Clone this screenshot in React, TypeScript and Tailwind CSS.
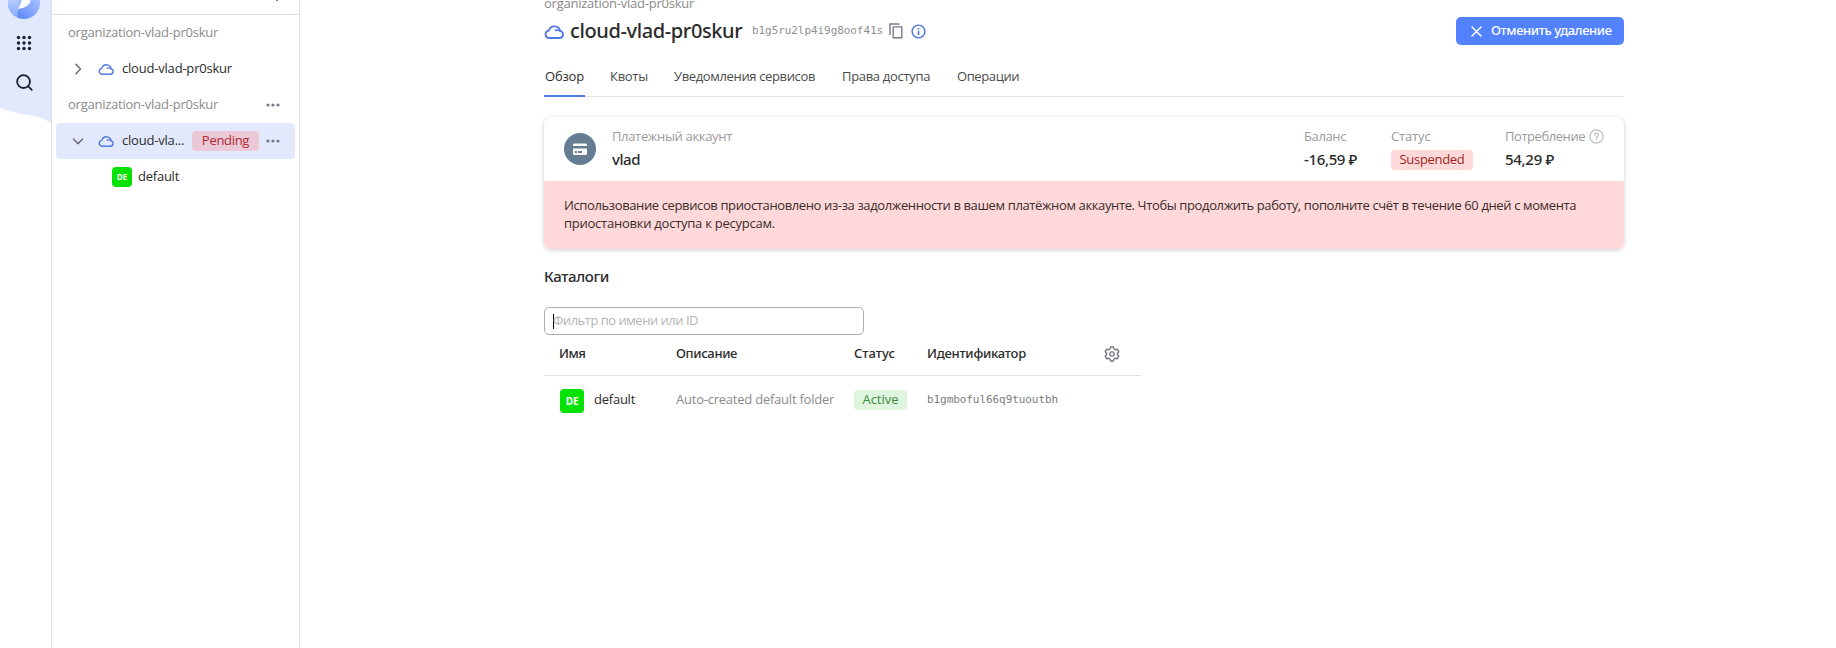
import type { ReactNode } from 'react';

function CloudIcon({ className }: { className: string }) {
  return (
    <svg className={className} viewBox="0 0 20 15" fill="none" stroke="#5179e0" strokeWidth="1.8" strokeLinecap="round" strokeLinejoin="round">
      <path d="M4.600 14H15.600A3.500 3.500 0 0 0 16.300 7.100 5.900 5.900 0 0 0 4.800 6.700 3.700 3.700 0 0 0 4.600 14Z" />
      <path d="M16.300 7.100A5 5 0 0 0 11.600 6.400" />
    </svg>
  );
}

function Dots() {
  return (
    <svg className="h-4 w-4 shrink-0" viewBox="0 0 16 16" fill="#777b82">
      <circle cx="3" cy="8" r="1.6" />
      <circle cx="8" cy="8" r="1.6" />
      <circle cx="13" cy="8" r="1.6" />
    </svg>
  );
}

function Chevron({ open }: { open?: boolean }) {
  return (
    <svg className="h-4 w-4 shrink-0" viewBox="0 0 16 16" fill="none" stroke="#6f7278" strokeWidth="1.5" strokeLinecap="round" strokeLinejoin="round">
      <path d={open ? 'M3.400 6 8 10.600 12.600 6' : 'M6 3.400 10.600 8 6 12.600'} />
    </svg>
  );
}

function Rail() {
  return (
    <nav className="relative w-[52px] shrink-0 border-r border-[#dddee3]">
      <svg className="absolute top-0 left-0 h-[130px] w-[51px]" viewBox="0 0 51 130">
        <path d="M0 0H51V123.500C40 113 20 117 0 107.500Z" fill="#e3e9fd" />
      </svg>
      <div className="relative flex w-12 flex-col items-center">
        <svg className="h-[19px] w-8" viewBox="0 0 32 19">
          <defs>
            <linearGradient id="logo" x1="0.300" y1="1" x2="0.900" y2="0.300">
              <stop offset="0" stopColor="#5a86fa" />
              <stop offset="1" stopColor="#a9c2ff" />
            </linearGradient>
            <linearGradient id="logoSide" x1="0" y1="0" x2="0" y2="1">
              <stop offset="0" stopColor="#b5cbff" />
              <stop offset="1" stopColor="#86a8fb" />
            </linearGradient>
          </defs>
          <circle cx="16" cy="3" r="16" fill="url(#logo)" />
          <path d="M0 0V3A16 16 0 0 0 10 17.800C9 14 9.500 11 11 8L12 0Z" fill="url(#logoSide)" />
          <path d="M13.500 0H22.500C22 5 17.500 8 10 9C11.500 6.500 12.500 4 13.500 0Z" fill="#fff" />
        </svg>
        <svg className="mt-4 h-4 w-4" viewBox="0 0 16 16" fill="#1d1f29">
          <circle cx="2.500" cy="2.500" r="1.700" /><circle cx="8" cy="2.500" r="1.700" /><circle cx="13.500" cy="2.500" r="1.700" />
          <circle cx="2.500" cy="8" r="1.700" /><circle cx="8" cy="8" r="1.700" /><circle cx="13.500" cy="8" r="1.700" />
          <circle cx="2.500" cy="13.500" r="1.700" /><circle cx="8" cy="13.500" r="1.700" /><circle cx="13.500" cy="13.500" r="1.700" />
        </svg>
        <svg className="mt-[23px] h-[17px] w-[17px]" viewBox="0 0 18 18" fill="none" stroke="#1d1f29" strokeWidth="1.900" strokeLinecap="round">
          <circle cx="8" cy="8" r="6.800" />
          <path d="M13 13 16.700 16.700" />
        </svg>
      </div>
    </nav>
  );
}

function Sidebar() {
  return (
    <aside className="flex w-[248px] shrink-0 flex-col border-r border-[#dddee3]">
      <div className="relative h-[15px] shrink-0 border-b border-[#dddee3]">
        <span className="absolute top-0 left-[224px] h-px w-0.5 bg-[#777b82]" />
      </div>
      <div className="flex h-9 items-center pl-4 tracking-[-0.24px] text-[#8b8b8b]">organization-vlad-pr0skur</div>
      <div className="flex h-9 items-center pl-[18px]">
        <Chevron />
        <CloudIcon className="ml-3 h-3 w-4" />
        <span className="ml-2 tracking-[-0.200px]">cloud-vlad-pr0skur</span>
      </div>
      <div className="flex h-9 items-center justify-between pr-[18px] pl-4">
        <span className="tracking-[-0.24px] text-[#8b8b8b]">organization-vlad-pr0skur</span>
        <Dots />
      </div>
      <div className="mx-1 flex h-9 items-center rounded bg-[#e3e9fd] pr-[14px] pl-[14px]">
        <Chevron open />
        <CloudIcon className="ml-3 h-3 w-4" />
        <span className="ml-2 w-[70px] tracking-[-0.200px]">cloud-vla...</span>
        <span className="flex h-5 w-[67px] items-center justify-center rounded-sm bg-[#eac8d5] tracking-[-0.300px] text-[#b02736]">Pending</span>
        <span className="ml-auto flex"><Dots /></span>
      </div>
      <div className="flex h-9 items-center pl-[60px]">
        <span className="flex h-5 w-5 items-center justify-center rounded bg-[#04e204] text-[8px] font-bold text-white">DE</span>
        <span className="ml-1.5 tracking-[-0.240px]">default</span>
      </div>
    </aside>
  );
}

function Header() {
  return (
    <header className="flex flex-col">
      <div className="-mt-[7px] h-[23px] leading-5 tracking-[-0.24px] text-[#8b8b8b]">organization-vlad-pr0skur</div>
      <div className="flex h-[30px] items-center">
        <CloudIcon className="h-[15px] w-5" />
        <h1 className="ml-1.5 w-[182px] font-['Noto_Sans',sans-serif] text-[20px] leading-[30px] font-medium tracking-[-0.380px] whitespace-nowrap">cloud-vlad-pr0skur</h1>
        <span className="w-[137px] font-['DejaVu_Sans_Mono',monospace] text-[11px] tracking-[-0.070px] text-[#8f8f8f]">b1g5ru2lp4i9g8oof41s</span>
        <svg className="h-4 w-[14px]" viewBox="0 0 14 16" fill="none" stroke="#777b82" strokeWidth="1.400">
          <path d="M4.200 3.900H12.800V14.800H4.200Z" />
          <path d="M1 12V1H10.500" />
        </svg>
        <svg className="ml-2 h-[15px] w-[15px]" viewBox="0 0 15 15" fill="none" stroke="#4a73de" strokeWidth="1.400">
          <circle cx="7.500" cy="7.500" r="6.400" />
          <path d="M7.500 6.700V11M7.500 4V5.500" strokeWidth="1.600" />
        </svg>
        <button className="ml-auto flex h-7 w-[168px] items-center rounded-[5px] bg-[#5282ff] pl-[15px] font-['Noto_Sans',sans-serif] font-medium text-white">
          <svg className="h-[11px] w-[11px]" viewBox="0 0 11 11" stroke="#fff" strokeWidth="1.500" strokeLinecap="round">
            <path d="M1 1 10 10M10 1 1 10" />
          </svg>
          <span className="-mt-px ml-[9px] tracking-[-0.400px] whitespace-nowrap">Отменить удаление</span>
        </button>
      </div>
      <nav className="mt-[13px] flex h-[38px] gap-[25px] border-b border-[#e3e3e5] leading-[34px] whitespace-nowrap text-[#4b4b4b]">
        <span className="h-[38px] w-[41px] border-b-2 border-[#4f7de4] pl-px tracking-[-0.180px] text-[#2c2c2c]">Обзор</span>
        <span className="w-[39px] tracking-[-0.300px]">Квоты</span>
        <span className="w-[143px] tracking-[-0.355px]">Уведомления сервисов</span>
        <span className="w-[90px] tracking-[-0.315px]">Права доступа</span>
        <span className="tracking-[-0.400px]">Операции</span>
      </nav>
    </header>
  );
}

function Stat({ label, className, children }: { label: ReactNode; className: string; children: ReactNode }) {
  return (
    <div className={`flex flex-col whitespace-nowrap ${className}`}>
      <div className="flex h-[19px] items-center text-[#9b9b9b]">{label}</div>
      <div className="mt-1 flex h-5 items-center">{children}</div>
    </div>
  );
}

function BillingCard() {
  return (
    <section className="mt-5 flex h-[132px] flex-col overflow-hidden rounded-[7px] bg-white shadow-[0_1px_4px_rgba(0,0,0,0.2)]">
      <div className="flex h-16 pt-[10px]">
        <svg className="mt-1.5 ml-5 h-8 w-8" viewBox="0 0 32 32">
          <circle cx="16" cy="16" r="16" fill="#667c93" />
          <path d="M10.300 10.500h11.400a1.300 1.300 0 0 1 1.300 1.300V13H9v-1.200a1.300 1.300 0 0 1 1.300-1.300ZM9 15.500H23V20.700a1.300 1.300 0 0 1-1.300 1.300H10.300A1.300 1.300 0 0 1 9 20.700Z" fill="#fff" />
          <path d="M10.800 19h2.200M14 19h4" stroke="#667c93" strokeWidth="1.800" />
        </svg>
        <Stat className="ml-4" label={<span className="tracking-[-0.340px]">Платежный аккаунт</span>}>
          <span className="-mt-0.5 font-['Noto_Sans',sans-serif] text-[15px] font-medium tracking-[-0.450px]">vlad</span>
        </Stat>
        <Stat className="ml-auto w-[86px]" label={<span className="-ml-px tracking-[-0.380px]">Баланс</span>}>
          <span className="-mt-0.5 -ml-px font-['Noto_Sans',sans-serif] text-[15px] font-medium tracking-[-0.360px]">-16,59 ₽</span>
        </Stat>
        <Stat className="w-[114px]" label={<span className="tracking-[-0.150px]">Статус</span>}>
          <span className="flex h-5 w-[82px] items-center justify-center rounded-sm bg-[#ffd9d9] pb-px tracking-[-0.300px] text-[#a01f1f]">Suspended</span>
        </Stat>
        <Stat
          className="w-[119px]"
          label={
            <>
              <span className="w-[84px] tracking-[-0.440px]">Потребление</span>
              <svg className="h-[15px] w-[15px]" viewBox="0 0 15 15" fill="none" stroke="#bdbdbd" strokeWidth="1.200" strokeLinecap="round">
                <circle cx="7.500" cy="7.500" r="6.600" />
                <path d="M5.600 6A1.900 1.900 0 1 1 8.300 7.600C7.700 8 7.500 8.200 7.500 8.900M7.500 10.900V11" />
              </svg>
            </>
          }
        >
          <span className="-mt-0.5 font-['Noto_Sans',sans-serif] text-[15px] font-medium tracking-[-0.300px]">54,29 ₽</span>
        </Stat>
      </div>
      <div className="grow bg-[#ffd9d9] px-5 pt-[15px] leading-[18px] text-[#3a2c2c]">
        <p className="tracking-[-0.380px] whitespace-nowrap">
          Использование сервисов приостановлено из-за задолженности в вашем платёжном аккаунте. Чтобы продолжить работу, пополните счёт в течение 60 дней с момента
        </p>
        <p className="tracking-[-0.245px]">приостановки доступа к ресурсам.</p>
      </div>
    </section>
  );
}

function Folders() {
  return (
    <section className="mt-[18px] flex flex-col">
      <h2 className="h-5 font-['Noto_Sans',sans-serif] text-[15px] leading-[19px] font-medium tracking-[-0.360px]">Каталоги</h2>
      <div className="mt-5 flex h-7 w-80 items-center rounded-[5px] border border-[#adadb0] pl-2">
        <span className="h-[15px] w-px bg-black" />
        <span className="-ml-px tracking-[-0.490px] text-[#b5b5b5]">Фильтр по имени или ID</span>
      </div>
      <div className="grid h-[41px] w-[597px] grid-cols-[117px_178px_73px_177px_16px] items-center border-b border-[#e1e1e3] pb-0.5 pl-[15px] font-['Noto_Sans',sans-serif] font-medium">
        <span className="tracking-[-0.500px]">Имя</span>
        <span className="tracking-[-0.360px]">Описание</span>
        <span className="tracking-[0px]">Статус</span>
        <span className="tracking-[-0.250px]">Идентификатор</span>
        <svg className="h-4 w-4" viewBox="0 0 16 16" fill="none" stroke="#777b82" strokeWidth="1.400" strokeLinejoin="round">
          <path d="M6.600 1H9.400L10 3 11.400 3.800 13.400 3.300 14.800 5.700 13.400 7.200V8.800L14.800 10.300 13.400 12.700 11.400 12.200 10 13 9.400 15H6.600L6 13 4.600 12.200 2.600 12.700 1.200 10.300 2.600 8.800V7.200L1.200 5.700 2.600 3.300 4.600 3.800 6 3Z" />
          <circle cx="8" cy="8" r="2.100" />
        </svg>
      </div>
      <div className="grid h-12 w-[597px] grid-cols-[116px_178px_73px_1fr] items-center pl-4 whitespace-nowrap">
        <div className="flex items-center">
          <span className="mt-0.5 flex h-6 w-6 items-center justify-center rounded bg-[#04e204] text-[10px] font-bold tracking-[-0.300px] text-white">DE</span>
          <span className="ml-2.5 tracking-[-0.240px]">default</span>
        </div>
        <span className="tracking-[-0.230px] text-[#8b8b8b]">Auto-created default folder</span>
        <span className="flex h-5 w-[53px] items-center justify-center rounded-sm bg-[#e0f5e0] pb-px text-[#3b8a3b]">Active</span>
        <span className="font-['DejaVu_Sans_Mono',monospace] text-[11px] tracking-[-0.070px] text-[#7c7c7c]">b1gmboful66q9tuoutbh</span>
      </div>
    </section>
  );
}

export default function App() {
  return (
    <div className="flex h-[648px] overflow-hidden bg-white font-['Open_Sans',sans-serif] text-[13px] text-[#2b2b2b]">
      <Rail />
      <Sidebar />
      <main className="ml-[244px] w-[1080px] shrink-0">
        <Header />
        <BillingCard />
        <Folders />
      </main>
    </div>
  );
}
